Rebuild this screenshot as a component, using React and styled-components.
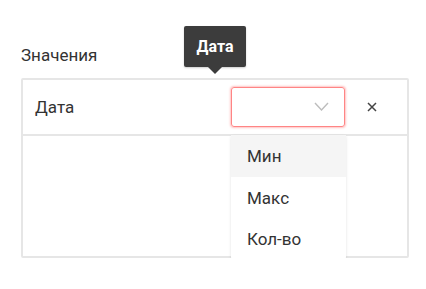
import React from "react";
import styled, { createGlobalStyle } from "styled-components";

const GlobalStyle = createGlobalStyle`
  body {
    margin: 0;
    background: #fff;
    font-family: Roboto, "Noto Sans", sans-serif;
    color: #333;
  }
`;

const Page = styled.div`
  padding: 45px 17px 0 21px;
`;

const Label = styled.div`
  font-size: 17px;
  line-height: 20px;
  color: #333;
  margin-bottom: 13px;
`;

const Panel = styled.div`
  border: 2px solid #e6e6e6;
  border-radius: 2px;
  height: 180px;
  box-sizing: border-box;
`;

const Row = styled.div`
  display: flex;
  align-items: center;
  height: 54px;
  border-bottom: 2px solid #e6e6e6;
  padding: 0 23px 0 12px;
`;

const Name = styled.div`
  flex: 1;
  font-size: 17px;
  color: #333;
`;

const SelectWrap = styled.div`
  position: relative;
  width: 114px;
  margin-top: -1px;
`;

const SelectBox = styled.div`
  height: 40px;
  box-sizing: border-box;
  border: 1px solid #ff8585;
  border-radius: 3px;
  box-shadow: 0 0 2px 1px rgba(255, 120, 120, 0.45);
  display: flex;
  align-items: center;
  justify-content: flex-end;
  padding-right: 15px;
`;

const Tooltip = styled.div`
  position: absolute;
  left: -47px;
  top: -61px;
  width: 62px;
  height: 41px;
  background: #3c3c3c;
  border-radius: 2px;
  color: #fff;
  font-weight: 700;
  font-size: 16px;
  display: flex;
  align-items: center;
  justify-content: center;
  box-shadow: 0 1px 2px rgba(0, 0, 0, 0.2);

  &::after {
    content: "";
    position: absolute;
    left: 24px;
    bottom: -7px;
    border-left: 7px solid transparent;
    border-right: 7px solid transparent;
    border-top: 7px solid #3c3c3c;
  }
`;

const Menu = styled.div`
  position: absolute;
  top: 48px;
  left: 0;
  width: 115px;
  background: #fff;
  box-shadow: 0 1px 3px rgba(0, 0, 0, 0.12);
  border-radius: 2px;
`;

const Option = styled.div`
  height: ${(p) => (p.$last ? "40px" : "42px")};
  display: flex;
  align-items: center;
  padding-left: 16px;
  font-size: 17px;
  color: #333;
  background: ${(p) => (p.$active ? "#f5f5f5" : "transparent")};
`;

const Close = styled.button`
  border: none;
  background: none;
  padding: 0;
  margin-left: 15px;
  width: 24px;
  height: 24px;
  display: flex;
  align-items: center;
  justify-content: center;
`;

const Chevron = () => (
  <svg width="15" height="9" viewBox="0 0 15 9">
    <path d="M1 1l6.5 7L14 1" fill="none" stroke="#bdbdbd" strokeWidth="1.4" />
  </svg>
);

const Cross = () => (
  <svg width="10" height="10" viewBox="0 0 10 10">
    <path d="M1 1l8 8M9 1l-8 8" stroke="#444" strokeWidth="1.5" />
  </svg>
);

const options = ["Мин", "Макс", "Кол-во"];

export default function App() {
  return (
    <Page>
      <GlobalStyle />
      <Label>Значения</Label>
      <Panel>
        <Row>
          <Name>Дата</Name>
          <SelectWrap>
            <Tooltip>Дата</Tooltip>
            <SelectBox>
              <Chevron />
            </SelectBox>
            <Menu>
              {options.map((o, i) => (
                <Option key={o} $active={i === 0} $last={i === options.length - 1}>
                  {o}
                </Option>
              ))}
            </Menu>
          </SelectWrap>
          <Close>
            <Cross />
          </Close>
        </Row>
      </Panel>
    </Page>
  );
}
